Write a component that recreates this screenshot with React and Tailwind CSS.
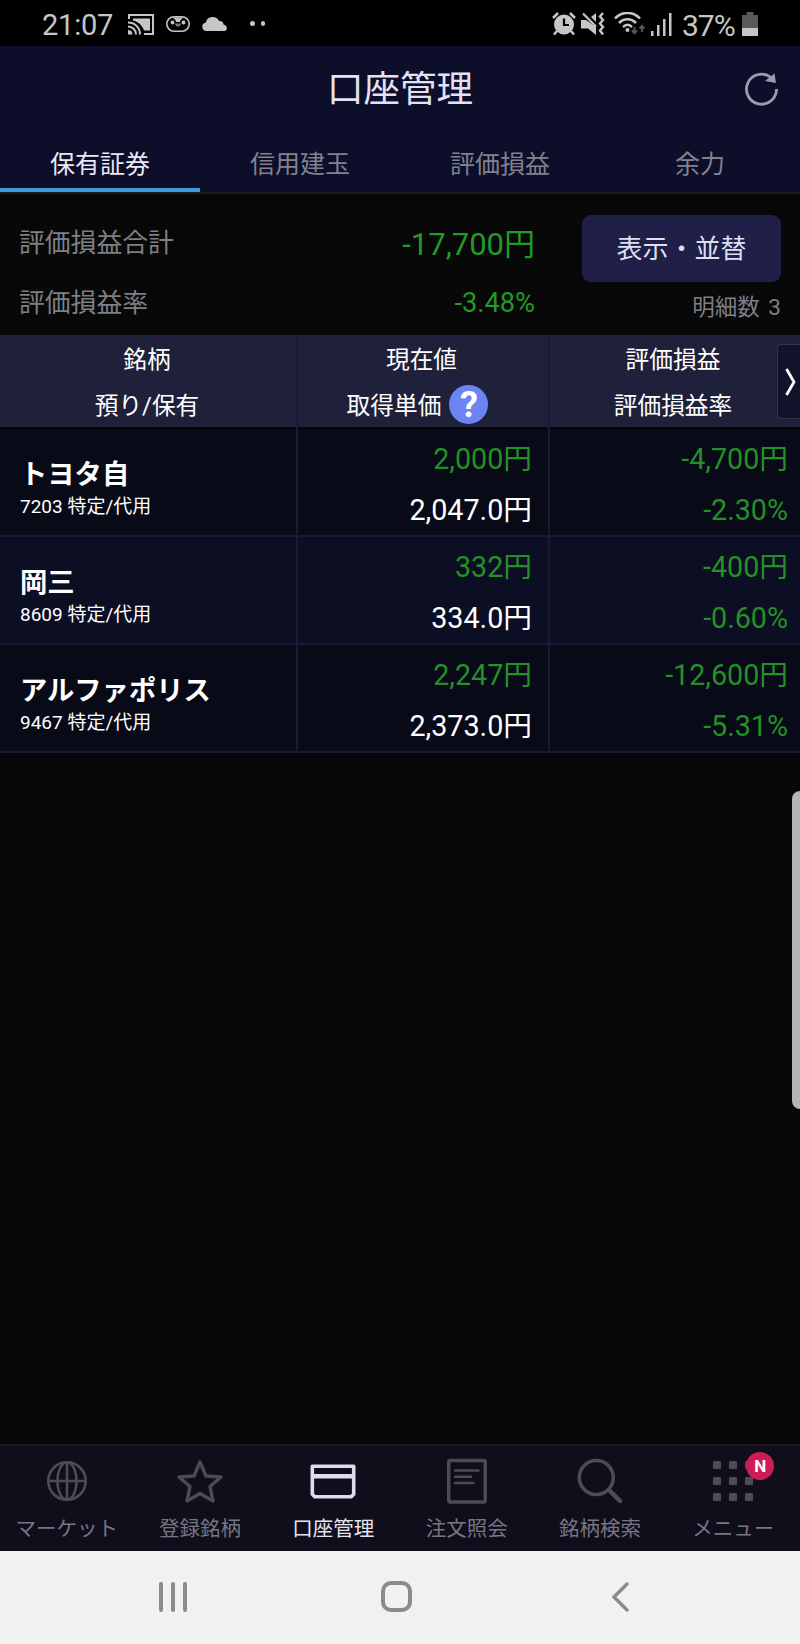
const tabs = ['保有証券', '信用建玉', '評価損益', '余力'];

const holdings = [
  { name: 'トヨタ自', code: '7203', price: '2,000', cost: '2,047.0', profit: '-4,700', rate: '-2.30%' },
  { name: '岡三', code: '8609', price: '332', cost: '334.0', profit: '-400', rate: '-0.60%' },
  { name: 'アルファポリス', code: '9467', price: '2,247', cost: '2,373.0', profit: '-12,600', rate: '-5.31%' },
];

const StatusBar = () => (
  <div className="flex h-[46px] shrink-0 items-center bg-black pl-[42px] pr-[42px] text-[#c6c6c6]">
    <span className="w-[86px] pt-[5px] text-[29px] leading-none tracking-[-0.200px]">21:07</span>
    <svg className="mt-[2px] h-[21px] w-[26px]" viewBox="0 0 26 21" fill="none" stroke="currentColor" strokeWidth="2">
      <path d="M1 5V1h24v19h-9" />
      <path d="M5 4.500h17v12h-6C14 11 10 7.500 5 6.500z" fill="currentColor" stroke="none" />
      <path d="M0 8.500c7 0 12 5 12 12M0 12.500c4.500 0 8 3.500 8 8" />
      <path d="M0 16a4.500 4.500 0 0 1 4.500 4.500H0z" fill="currentColor" stroke="none" />
    </svg>
    <svg className="ml-3 mt-[2px] h-4 w-6" viewBox="0 0 24 16" fill="none">
      <rect x="0.800" y="0.800" width="22.400" height="14.400" rx="7.200" stroke="currentColor" strokeWidth="1.600" />
      <path d="M5 1.500h14c-2 .5-4.500 1-5 4.500h-4C9.500 2.500 7 2 5 1.500z" fill="currentColor" />
      <circle cx="6.500" cy="6.500" r="1.900" fill="currentColor" />
      <circle cx="17.500" cy="6.500" r="1.900" fill="currentColor" />
      <path d="M8.500 7.500h7L13.500 10.500h-3z" fill="currentColor" opacity=".6" />
    </svg>
    <svg className="ml-3 mt-[1px] h-[14px] w-[25px]" viewBox="0 0 25 14" fill="currentColor">
      <path d="M4 14C-1 13.500-1 6 4 5.500 5-1.500 15-1.500 17 4c3-.5 4.500 1.500 4.500 3.500C26 8.500 26 14 21.500 14z" />
    </svg>
    <span className="ml-[23px] mt-[1px] flex gap-[6px]">
      <i className="size-[4.500px] rounded-full bg-[#c6c6c6]" />
      <i className="size-[4.500px] rounded-full bg-[#c6c6c6]" />
    </span>

    <div className="ml-auto flex items-center pt-[2px]">
      <svg className="size-6" viewBox="0 0 24 24" fill="none" stroke="currentColor">
        <circle cx="12" cy="12.500" r="10" fill="currentColor" stroke="none" />
        <path d="M1 6 6 1M23 6 18 1" strokeWidth="2.600" />
        <path d="m5 19-3 3.500M19 19l3 3.500" strokeWidth="2.600" />
        <path d="M12 6.500V13h5" stroke="#000" strokeWidth="2.200" />
      </svg>
      <svg className="ml-[5px] h-6 w-6" viewBox="0 0 24 24" fill="none" stroke="currentColor">
        <path d="M0 8h5l10 7v8l-8-6.500H0z" fill="currentColor" stroke="none" />
        <path d="M15 1v9l-5-5z" fill="currentColor" stroke="none" />
        <path d="m2 1.500 13 13" strokeWidth="2.200" />
        <path d="m22 1-3 3.500 3 3.500-3 3.500 3 3.500-3 3.500 3 4" strokeWidth="2.400" />
      </svg>
      <svg className="ml-[9px] h-6 w-8" viewBox="0 0 32 24" fill="none" stroke="currentColor">
        <path d="M1 6.500C8-1 19-1 26 6.500M5 11c5-5 12-5 17 0M9 15c3-3 6-3 9 0" strokeWidth="2.500" />
        <circle cx="13.500" cy="18" r="2" fill="currentColor" stroke="none" />
        <path d="M20.500 15v6m-2.500-2.500 2.500 2.800 2.500-2.800M28 20v-6m-2.500 2.500L28 13.700l2.500 2.800" stroke="#555" strokeWidth="2" />
      </svg>
      <svg className="ml-[5px] h-[23px] w-[21px]" viewBox="0 0 21 23" fill="currentColor">
        <path d="M0 18h2.500v5H0zM6 12h2.500v11H6zM12 6h2.500v17H12zM18 0h2.500v23H18z" />
      </svg>
      <span className="ml-[10px] w-[60px] pt-[3px] text-[30px] leading-none tracking-[-1px]">37%</span>
      <svg className="h-6 w-4" viewBox="0 0 16 24">
        <path d="M4.500 0h7v3H16v13H0V3h4.500z" fill="#595959" />
        <path d="M0 16h16v8H0z" fill="currentColor" />
      </svg>
    </div>
  </div>
);

const Header = () => (
  <header className="h-[148px] shrink-0 border-b-2 border-[#1a1a29] bg-[#0d0e29]">
    <div className="grid h-[88px] grid-cols-[80px_1fr_80px] items-center">
      <span />
      <h1 className="text-center text-[36.500px] leading-none text-[#e2e2f4]">口座管理</h1>
      <svg className="mb-[2px] ml-[24px] size-[34px]" viewBox="0 0 34 34" fill="none" stroke="#9c9cac" strokeWidth="2.800">
        <path d="M32.500 17A15 15 0 1 1 26.500 5.200" />
        <path d="m30.500 1.500 1.500 9.500-11-2z" fill="#9c9cac" stroke="none" />
      </svg>
    </div>
    <nav className="grid h-[58px] grid-cols-4">
      {tabs.map((tab, i) => (
        <button
          key={tab}
          className={
            i === 0
              ? 'border-b-4 border-[#3b9bdc] pt-[7px] text-[25px] leading-none text-[#e8e8f6]'
              : 'border-b-4 border-transparent pt-[7px] text-[25px] leading-none text-[#81818f]'
          }
        >
          {tab}
        </button>
      ))}
    </nav>
  </header>
);

const Summary = () => (
  <section className="flex h-[141px] shrink-0 justify-between pl-[19px] pr-[19px] text-[#7f7f86]">
    <div className="flex w-[516px] flex-col pt-[20px] text-[25.800px] leading-none">
      <div className="flex h-[60px] items-center justify-between">
        <span>評価損益合計</span>
        <span className="text-[31px] text-[#229a26]">-17,700円</span>
      </div>
      <div className="flex h-[59px] items-center justify-between">
        <span>評価損益率</span>
        <span className="text-[27.200px] text-[#229a26]">-3.48%</span>
      </div>
    </div>
    <div className="flex w-[199px] flex-col items-end pt-[21px]">
      <button className="h-[67px] w-full rounded-[9px] bg-[#1f1f47] text-[26px] leading-none text-[#dddff2]">
        表示・並替
      </button>
      <span className="mt-[14px] text-[22.500px] leading-none [word-spacing:3px]">明細数 3</span>
    </div>
  </section>
);

const TableHead = () => (
  <div className="relative grid h-[94px] shrink-0 grid-cols-[298px_252px_250px] border-b-2 border-[#04040c] bg-[#1f213b] text-[23.700px] leading-none text-white">
    <div className="flex flex-col items-center border-r-2 border-[#1a1b35] pr-[2px] pt-[3px]">
      <span className="flex h-[46px] items-center">銘柄</span>
      <span className="flex h-[45px] items-center">預り/保有</span>
    </div>
    <div className="flex flex-col items-center border-r-2 border-[#1a1b35] pr-[3px] pt-[3px]">
      <span className="flex h-[46px] items-center">現在値</span>
      <span className="flex h-[45px] items-center pr-[8px]">
        取得単価
        <span className="mb-[4px] ml-[8px] flex size-[39px] items-center justify-center rounded-full bg-[#6b83f5] text-[36px] font-bold">
          ?
        </span>
      </span>
    </div>
    <div className="flex flex-col items-center pr-[4px] pt-[3px]">
      <span className="flex h-[46px] items-center">評価損益</span>
      <span className="flex h-[45px] items-center">評価損益率</span>
    </div>
    <div className="absolute right-0 top-[9px] flex h-[75px] w-[23px] items-center justify-end rounded-l-[4px] border border-r-0 border-[#33344c] bg-[#12132a]">
      <svg className="mr-[4px] h-[28px] w-[11px]" viewBox="0 0 11 28" fill="none" stroke="#fff" strokeWidth="2.800">
        <path d="m1.500 1 7.500 13-7.500 13" />
      </svg>
    </div>
  </div>
);

const Row = ({ item, index }) => (
  <div
    className={
      index % 2
        ? 'grid h-[108px] shrink-0 grid-cols-[298px_252px_250px] border-b-2 border-[#1a1b30] bg-[#0c0e23] text-[28.700px] leading-none'
        : 'grid h-[108px] shrink-0 grid-cols-[298px_252px_250px] border-b-2 border-[#1a1b30] bg-[#080a17] text-[28.700px] leading-none'
    }
  >
    <div className="flex flex-col border-r-2 border-[#1a1b30] pl-[20px] pt-[33px] text-white">
      <span className="text-[27.300px] font-bold">{item.name}</span>
      <span className="mt-[8px] text-[19px]">{item.code} 特定/代用</span>
    </div>
    <div className="flex flex-col items-end border-r-2 border-[#1a1b30] pr-[16px] pt-[5px]">
      <span className="flex h-[51px] items-center text-[#239127]">{item.price}円</span>
      <span className="flex h-[51px] items-center text-white">{item.cost}円</span>
    </div>
    <div className="flex flex-col items-end pr-[12px] pt-[5px] text-[#239127]">
      <span className="flex h-[51px] items-center">{item.profit}円</span>
      <span className="flex h-[51px] items-center">{item.rate}</span>
    </div>
  </div>
);

const GlobeIcon = () => (
  <svg className="size-[46px]" viewBox="0 0 46 46" fill="none" stroke="currentColor" strokeWidth="2.600">
    <circle cx="23" cy="23" r="18.700" />
    <ellipse cx="23" cy="23" rx="9.500" ry="18.700" />
    <path d="M23 4v38M4 23h38" />
  </svg>
);

const StarIcon = () => (
  <svg className="size-[46px]" viewBox="0 0 46 46" fill="none" stroke="currentColor" strokeWidth="3.400" strokeLinejoin="round">
    <path d="m23 4 6 14 15 1-11 9.500L36 43l-13-7.500L10 43l3-14.500L2 19l15-1z" />
  </svg>
);

const CardIcon = () => (
  <svg className="size-[46px]" viewBox="0 0 46 46" fill="none" stroke="currentColor" strokeWidth="3.600">
    <path d="M2.300 8.300h41.400v28l-2.500 2.500H4.800l-2.500-2.500z" strokeLinejoin="round" />
    <path d="M2 18.300h42" strokeWidth="4.500" />
  </svg>
);

const DocIcon = () => (
  <svg className="size-[46px]" viewBox="0 0 46 46" fill="none" stroke="currentColor">
    <rect x="4.700" y="2.500" width="36.500" height="41.500" rx="1.500" strokeWidth="3.400" />
    <path d="M11 12.500h23.500M11 18.700h16M11 25h18.500" strokeWidth="2.500" strokeLinecap="round" />
  </svg>
);

const SearchIcon = () => (
  <svg className="size-[46px]" viewBox="0 0 46 46" fill="none" stroke="currentColor" strokeLinecap="round">
    <circle cx="19.300" cy="19.500" r="17" strokeWidth="3.600" />
    <path d="m32 32 11 11" strokeWidth="4.500" />
  </svg>
);

const MenuIcon = () => (
  <span className="relative">
    <svg className="size-[46px]" viewBox="0 0 46 46" fill="currentColor">
      {[3, 19, 35].map((y) =>
        [3, 19, 35].map((x) => <rect key={`${x}-${y}`} x={x} y={y} width="8" height="8" rx="1" />)
      )}
    </svg>
    <span className="absolute left-[36px] top-[-6px] flex size-[28px] items-center justify-center rounded-full bg-[#cf1b56] text-[17px] font-bold leading-none text-white">
      N
    </span>
  </span>
);

const navItems = [
  { label: 'マーケット', Icon: GlobeIcon },
  { label: '登録銘柄', Icon: StarIcon },
  { label: '口座管理', Icon: CardIcon, active: true },
  { label: '注文照会', Icon: DocIcon },
  { label: '銘柄検索', Icon: SearchIcon },
  { label: 'メニュー', Icon: MenuIcon },
];

const BottomNav = () => (
  <nav className="grid h-[107px] shrink-0 grid-cols-6 border-t-2 border-[#1c1b28] bg-[#100e1b]">
    {navItems.map(({ label, Icon, active }) => (
      <div
        key={label}
        className={
          active
            ? 'flex flex-col items-center pt-[12px] text-[#dddced]'
            : 'flex flex-col items-center pt-[12px] text-[#4c4b57]'
        }
      >
        <Icon />
        <span
          className={
            active
              ? 'mt-[15px] text-[20.500px] leading-none text-[#e4e3f2]'
              : 'mt-[15px] text-[20.500px] leading-none text-[#777683]'
          }
        >
          {label}
        </span>
      </div>
    ))}
  </nav>
);

const SystemNav = () => (
  <div className="flex h-[93px] shrink-0 items-center bg-[#f1f1f1] pb-[2px] pl-[159px] text-[#8b8b8b]">
    <div className="flex gap-[8px]">
      <i className="h-[30px] w-[4px] rounded-full bg-[#8b8b8b]" />
      <i className="h-[30px] w-[4px] rounded-full bg-[#8b8b8b]" />
      <i className="h-[30px] w-[4px] rounded-full bg-[#8b8b8b]" />
    </div>
    <div className="ml-[194px] size-[31px] rounded-[10px] border-4 border-[#8b8b8b]" />
    <svg className="ml-[200px] h-[30px] w-[17px]" viewBox="0 0 17 30" fill="none" stroke="currentColor" strokeWidth="3.400" strokeLinecap="round">
      <path d="M15 2 2 15l13 13" />
    </svg>
  </div>
);

const App = () => (
  <div className="relative flex h-[1644px] w-[800px] flex-col overflow-hidden bg-[#080808] font-['Roboto','Noto_Sans_CJK_JP',sans-serif]" lang="ja">
    <StatusBar />
    <Header />
    <Summary />
    <TableHead />
    {holdings.map((item, i) => (
      <Row key={item.code} item={item} index={i} />
    ))}
    <main className="flex-1" />
    <BottomNav />
    <SystemNav />
    <div className="absolute right-0 top-[791px] h-[318px] w-2 rounded-l-[8px] bg-[#b5b5b3]" />
  </div>
);

export default App;
